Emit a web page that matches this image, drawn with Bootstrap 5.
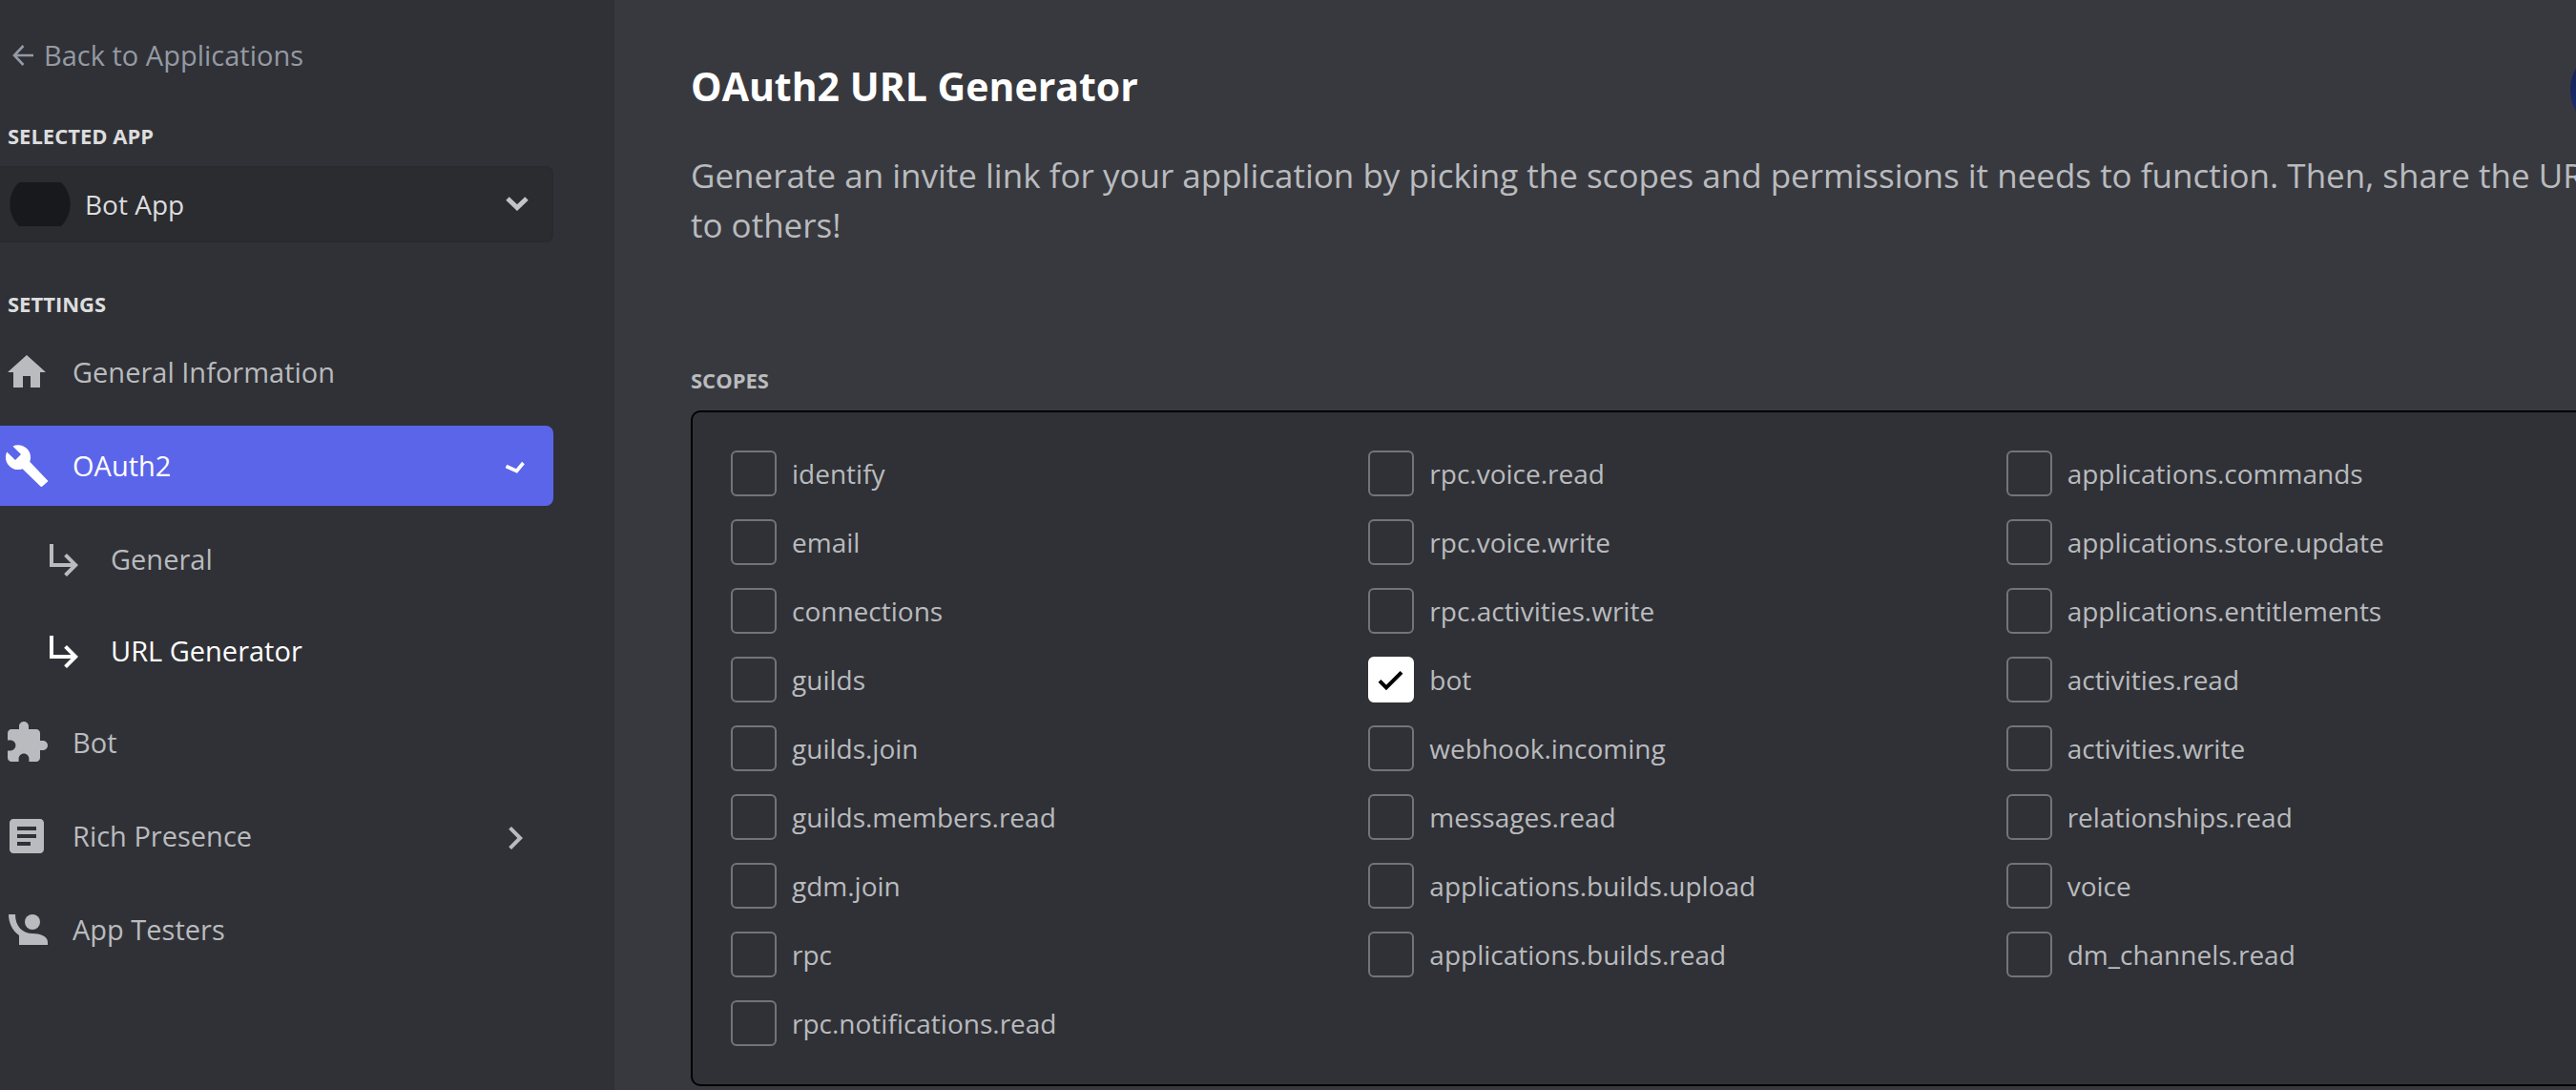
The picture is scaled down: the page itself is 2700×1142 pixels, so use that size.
<!DOCTYPE html>
<html lang="en">
<head>
<meta charset="utf-8">
<meta name="viewport" content="width=device-width, initial-scale=1">
<title>OAuth2 URL Generator</title>
<link href="https://cdn.jsdelivr.net/npm/bootstrap@5.3.0/dist/css/bootstrap.min.css" rel="stylesheet">
<style>
  body {
    background: #38393e;
    color: #b9bbbe;
    font: 400 28px/40px "Open Sans", "Noto Sans", sans-serif;
  }
  a { color: inherit; text-decoration: none; }
  a:hover { color: #fff; }

  /* Sidebar */
  .side {
    flex: 0 0 644px;
    background: #303136;
    padding: 38px 64px 40px 0;
  }
  .back-link { gap: 10px; padding-left: 12px; color: #949aa5; font-size: 29px; }
  .caption {
    margin: 0 0 16px;
    color: #b9bbbe;
    font-size: 22px;
    font-weight: 700;
    line-height: 32px;
    text-transform: uppercase;
  }
  .side .caption { margin-top: 48px; padding-left: 8px; color: #dcddde; }
  .app-picker {
    height: 80px;
    gap: 15px;
    padding: 0 20px 0 10px;
    border: 2px solid #292a2e;
    border-left: 0;
    border-radius: 0 8px 8px 0;
    background: #2b2c30;
    color: #dcddde;
    font-weight: 500;
  }
  .app-shape { flex: none; width: 64px; height: 46px; }
  .side .caption.settings { margin-bottom: 14px; }
  .side-nav { gap: 14px; }
  .sub-nav { gap: 12px; margin-top: 14px; margin-bottom: -2px; }
  .side-item {
    height: 84px;
    gap: 24px;
    padding: 0 16px 0 4px;
    border-radius: 0 8px 8px 0;
    font-size: 29px;
  }
  .sub-nav .side-item { padding-left: 44px; }
  .side-item.current { background: #5b65ea; color: #fff; }
  .side-item.here { color: #fff; }
  .side-item svg { flex: none; width: 48px; height: 48px; }

  /* Main column */
  .content { min-width: 0; padding: 49px 0 4px 80px; }
  .wide { margin-right: -113px; }
  .page-title { margin: 0; color: #fff; font-size: 41px; font-weight: 700; line-height: 82px; }
  .user-pic {
    width: 90px;
    height: 90px;
    margin-right: 29px;
    background: linear-gradient(#141f52, #1d2f75);
  }
  .intro { margin: 19px 0 120px; padding-right: 60px; font-size: 35px; line-height: 52px; }
  .scope-box {
    padding: 40px;
    border: 2px solid #000;
    border-radius: 10px;
    background: #303136;
  }
  .scope-list { gap: 24px; }
  .scope { gap: 16px; height: 48px; }
  .scope .form-check-input {
    flex: none;
    width: 48px;
    height: 48px;
    margin: 0;
    border: 2px solid #72747a;
    border-radius: 6px;
    background-color: transparent;
  }
  .scope .form-check-input:checked {
    border-color: #fff;
    background-color: #fff;
    background-origin: border-box;
    background-size: 48px 48px;
    background-image: url("data:image/svg+xml,%3Csvg xmlns='http://www.w3.org/2000/svg' viewBox='0 0 48 48'%3E%3Cpath fill='none' stroke='%23000' stroke-width='4' d='M12 25.300L19 32.300 35 16.300'/%3E%3C/svg%3E");
  }
</style>
</head>
<body>
<div class="d-flex min-vh-100 overflow-hidden">

  <aside class="side">
    <a href="#" class="back-link d-flex align-items-center">
      <svg width="24" height="24" viewBox="0 0 24 24" fill="none" stroke="currentColor" stroke-width="2.600" aria-hidden="true"><path d="M12.500 2L3 12l9.500 10M3 12h20"/></svg>
      Back to Applications
    </a>

    <h2 class="caption" id="app-label">Selected App</h2>
    <button type="button" class="app-picker d-flex align-items-center w-100 text-start" aria-labelledby="app-label app-name">
      <svg class="app-shape" viewBox="0 0 64 46" aria-hidden="true"><path fill="#18191c" d="M10 0H54A32 32 0 0 1 54 46H10A32 32 0 0 1 10 0z"/></svg>
      <span id="app-name" class="flex-grow-1">Bot App</span>
      <svg width="32" height="32" viewBox="0 0 32 32" fill="none" stroke="#c3c4c7" stroke-width="5" aria-hidden="true"><path d="M6 10l10 9.500L26 10"/></svg>
    </button>

    <h2 class="caption settings">Settings</h2>
    <nav aria-label="Settings">
      <ul class="side-nav list-unstyled d-flex flex-column m-0">
        <li><a href="#" class="side-item d-flex align-items-center">
          <svg viewBox="0 0 24 24" fill="currentColor" aria-hidden="true"><path d="M10 20v-6h4v6h5v-8h3L12 3 2 12h3v8z"/></svg>
          General Information</a></li>
        <li>
          <a href="#" class="side-item current d-flex align-items-center">
            <svg viewBox="0 0 24 24" fill="currentColor" aria-hidden="true"><path d="M23 19.700L13.600 9.900c.9-2.300.4-5-1.500-6.900-2-2-5-2.400-7.400-1.300L9 6 6 9 1.600 4.700C.4 7.100.9 10.100 2.900 12.100c1.900 1.900 4.600 2.400 6.900 1.500l9.400 9.200q.5.400 1 0l2.800-2.500q.4-.3 0-.6z"/></svg>
            <span class="flex-grow-1">OAuth2</span>
            <svg viewBox="0 0 48 48" fill="none" stroke="currentColor" stroke-width="3.600" aria-hidden="true"><path d="M14.500 24.500L25.500 29.500 32.500 21"/></svg>
          </a>
          <ul class="sub-nav list-unstyled d-flex flex-column">
            <li><a href="#" class="side-item d-flex align-items-center">
              <svg viewBox="0 0 24 24" fill="currentColor" aria-hidden="true"><path d="M19 15l-6 6-1.420-1.420L15.170 16H4V4h2v10h9.170l-3.590-3.580L13 9z"/></svg>
              General</a></li>
            <li><a href="#" class="side-item here d-flex align-items-center" aria-current="page">
              <svg viewBox="0 0 24 24" fill="currentColor" aria-hidden="true"><path d="M19 15l-6 6-1.420-1.420L15.170 16H4V4h2v10h9.170l-3.590-3.580L13 9z"/></svg>
              URL Generator</a></li>
          </ul>
        </li>
        <li><a href="#" class="side-item d-flex align-items-center">
          <svg viewBox="0 0 24 24" fill="currentColor" aria-hidden="true"><path d="M20.500 11H19V7c0-1.100-.9-2-2-2h-4V3.500C13 2.120 11.880 1 10.500 1S8 2.120 8 3.500V5H4c-1.100 0-1.990.9-1.990 2v3.800H3.500c1.490 0 2.700 1.210 2.700 2.700s-1.210 2.700-2.700 2.700H2V20c0 1.100.9 2 2 2h3.800v-1.500c0-1.490 1.210-2.700 2.700-2.700s2.700 1.210 2.700 2.700V22H17c1.100 0 2-.9 2-2v-4h1.500c1.380 0 2.500-1.120 2.500-2.500S21.880 11 20.500 11z"/></svg>
          Bot</a></li>
        <li><a href="#" class="side-item d-flex align-items-center">
          <svg viewBox="0 0 24 24" fill="currentColor" aria-hidden="true"><path d="M19 3H5c-1.100 0-2 .9-2 2v14c0 1.100.9 2 2 2h14c1.100 0 2-.9 2-2V5c0-1.100-.9-2-2-2zm-5 14H7v-2h7v2zm3-4H7v-2h10v2zm0-4H7V7h10v2z"/></svg>
          <span class="flex-grow-1">Rich Presence</span>
          <svg viewBox="0 -1 24 24" fill="currentColor" aria-hidden="true"><path d="M8.590 16.590L13.170 12 8.590 7.410 10 6l6 6-6 6z"/></svg></a></li>
        <li><a href="#" class="side-item d-flex align-items-center">
          <svg viewBox="0 0 24 24" fill="currentColor" aria-hidden="true"><circle cx="15" cy="8" r="4"/><path d="M2.500 4H6c0 6 3.500 10 9 10 4 0 8 1.500 8 4.500V20H8v-5C4.500 12.500 2.500 8.500 2.500 4z"/></svg>
          App Testers</a></li>
      </ul>
    </nav>
  </aside>

  <main class="content flex-grow-1">
    <div class="wide">
      <header class="d-flex justify-content-between align-items-start">
        <h1 class="page-title">OAuth2 URL Generator</h1>
        <div class="user-pic rounded-circle"></div>
      </header>
      <p class="intro">Generate an invite link for your application by picking the scopes and permissions it needs to function. Then, share the URL to others!</p>

      <h2 class="caption" id="scopes-title">Scopes</h2>
      <div class="scope-box" role="group" aria-labelledby="scopes-title">
        <div class="row g-0">
          <div class="col-4 scope-list d-flex flex-column">
            <div class="scope d-flex align-items-center"><input class="form-check-input" type="checkbox" id="s1"><label for="s1">identify</label></div>
            <div class="scope d-flex align-items-center"><input class="form-check-input" type="checkbox" id="s2"><label for="s2">email</label></div>
            <div class="scope d-flex align-items-center"><input class="form-check-input" type="checkbox" id="s3"><label for="s3">connections</label></div>
            <div class="scope d-flex align-items-center"><input class="form-check-input" type="checkbox" id="s4"><label for="s4">guilds</label></div>
            <div class="scope d-flex align-items-center"><input class="form-check-input" type="checkbox" id="s5"><label for="s5">guilds.join</label></div>
            <div class="scope d-flex align-items-center"><input class="form-check-input" type="checkbox" id="s6"><label for="s6">guilds.members.read</label></div>
            <div class="scope d-flex align-items-center"><input class="form-check-input" type="checkbox" id="s7"><label for="s7">gdm.join</label></div>
            <div class="scope d-flex align-items-center"><input class="form-check-input" type="checkbox" id="s8"><label for="s8">rpc</label></div>
            <div class="scope d-flex align-items-center"><input class="form-check-input" type="checkbox" id="s9"><label for="s9">rpc.notifications.read</label></div>
          </div>
          <div class="col-4 scope-list d-flex flex-column">
            <div class="scope d-flex align-items-center"><input class="form-check-input" type="checkbox" id="s10"><label for="s10">rpc.voice.read</label></div>
            <div class="scope d-flex align-items-center"><input class="form-check-input" type="checkbox" id="s11"><label for="s11">rpc.voice.write</label></div>
            <div class="scope d-flex align-items-center"><input class="form-check-input" type="checkbox" id="s12"><label for="s12">rpc.activities.write</label></div>
            <div class="scope d-flex align-items-center"><input class="form-check-input" type="checkbox" id="s13" checked><label for="s13">bot</label></div>
            <div class="scope d-flex align-items-center"><input class="form-check-input" type="checkbox" id="s14"><label for="s14">webhook.incoming</label></div>
            <div class="scope d-flex align-items-center"><input class="form-check-input" type="checkbox" id="s15"><label for="s15">messages.read</label></div>
            <div class="scope d-flex align-items-center"><input class="form-check-input" type="checkbox" id="s16"><label for="s16">applications.builds.upload</label></div>
            <div class="scope d-flex align-items-center"><input class="form-check-input" type="checkbox" id="s17"><label for="s17">applications.builds.read</label></div>
          </div>
          <div class="col-4 scope-list d-flex flex-column">
            <div class="scope d-flex align-items-center"><input class="form-check-input" type="checkbox" id="s18"><label for="s18">applications.commands</label></div>
            <div class="scope d-flex align-items-center"><input class="form-check-input" type="checkbox" id="s19"><label for="s19">applications.store.update</label></div>
            <div class="scope d-flex align-items-center"><input class="form-check-input" type="checkbox" id="s20"><label for="s20">applications.entitlements</label></div>
            <div class="scope d-flex align-items-center"><input class="form-check-input" type="checkbox" id="s21"><label for="s21">activities.read</label></div>
            <div class="scope d-flex align-items-center"><input class="form-check-input" type="checkbox" id="s22"><label for="s22">activities.write</label></div>
            <div class="scope d-flex align-items-center"><input class="form-check-input" type="checkbox" id="s23"><label for="s23">relationships.read</label></div>
            <div class="scope d-flex align-items-center"><input class="form-check-input" type="checkbox" id="s24"><label for="s24">voice</label></div>
            <div class="scope d-flex align-items-center"><input class="form-check-input" type="checkbox" id="s25"><label for="s25">dm_channels.read</label></div>
          </div>
        </div>
      </div>
    </div>
  </main>
</div>
<script src="https://cdn.jsdelivr.net/npm/bootstrap@5.3.0/dist/js/bootstrap.bundle.min.js"></script>
</body>
</html>
